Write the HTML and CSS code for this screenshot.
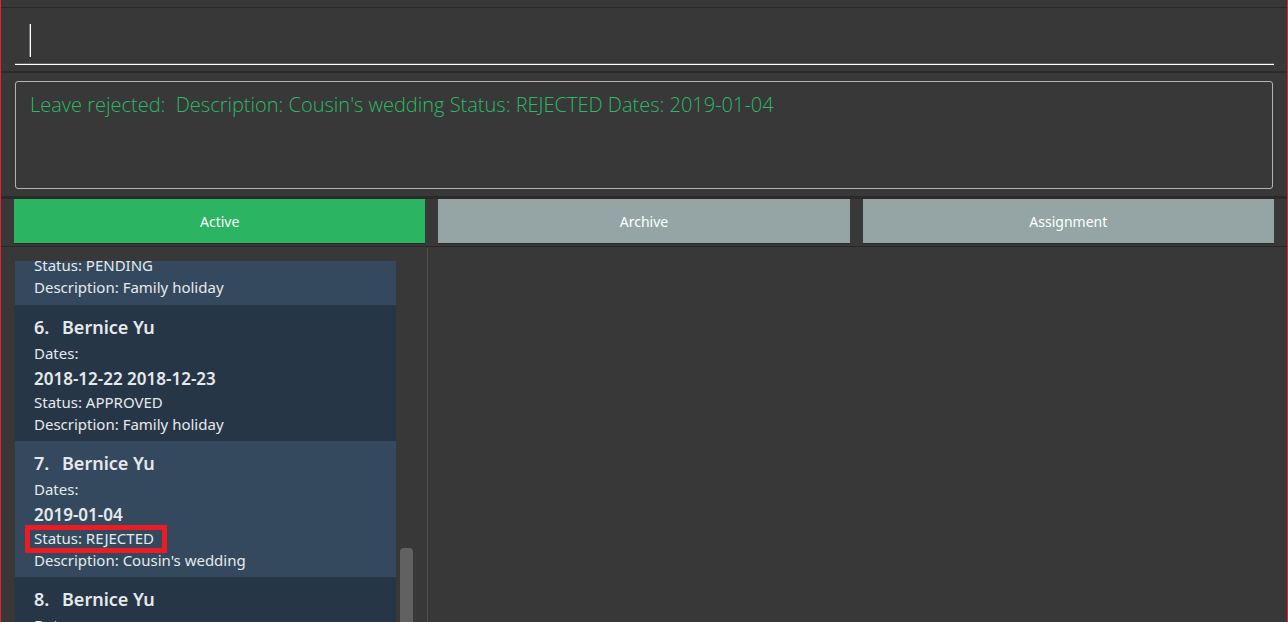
FILE: index.html
```html
<!DOCTYPE html>
<html lang="en">
<head>
<meta charset="utf-8">
<title>Leave applications</title>
<link rel="stylesheet" href="styles.css">
</head>
<body>
<div class="window">
  <div class="menu-edge"></div>
  <div class="command-bar">
    <input class="command-input" type="text" aria-label="Command" autocomplete="off">
    <span class="caret"></span>
  </div>
  <div class="result-bar">
    <output class="result">Leave rejected:&nbsp; Description: Cousin's wedding Status: REJECTED Dates: 2019-01-04</output>
  </div>
  <nav class="tabs">
    <button class="tab tab-active" type="button">Active</button>
    <button class="tab" type="button">Archive</button>
    <button class="tab" type="button">Assignment</button>
  </nav>
  <main class="panes">
    <section class="list-pane">
      <ol class="list">
        <li class="card">
          <p class="line"><span>Status: PENDING</span></p>
          <p class="line">Description: Family holiday</p>
        </li>
        <li class="card">
          <h2 class="name"><span class="number">6.</span>Bernice Yu</h2>
          <p class="label">Dates:</p>
          <p class="dates">2018-12-22 2018-12-23</p>
          <p class="line"><span>Status: APPROVED</span></p>
          <p class="line">Description: Family holiday</p>
        </li>
        <li class="card">
          <h2 class="name"><span class="number">7.</span>Bernice Yu</h2>
          <p class="label">Dates:</p>
          <p class="dates">2019-01-04</p>
          <p class="line"><span class="marked">Status: REJECTED</span></p>
          <p class="line">Description: Cousin's wedding</p>
        </li>
        <li class="card">
          <h2 class="name"><span class="number">8.</span>Bernice Yu</h2>
          <p class="label">Dates:</p>
        </li>
      </ol>
      <div class="scrollbar"><div class="thumb"></div></div>
    </section>
    <section class="detail-pane"></section>
  </main>
</div>
</body>
</html>
```

FILE: styles.css
```css
* {
  box-sizing: border-box;
}

body {
  margin: 0;
  background: #383838;
  font-family: "Segoe UI", "Open Sans", "Noto Sans", sans-serif;
}

.window {
  display: flex;
  flex-direction: column;
  height: 100vh;
  overflow: hidden;
  border: solid #e32232;
  border-width: 0 1px;
  background: #383838;
}

.menu-edge {
  flex: none;
  height: 8px;
  border-bottom: 1px solid #282828;
}

.command-bar {
  position: relative;
  flex: none;
  padding: 8px 13px 6px 14px;
  border-bottom: 2px solid #2b2b2b;
}

.command-input {
  display: block;
  width: 100%;
  height: 49px;
  padding: 0 14px;
  border: 0;
  border-bottom: 1px solid #fff;
  outline: 0;
  background: transparent;
  box-shadow: inset 0 -1px #606060;
  color: #fff;
  font: 300 20px "Segoe UI", "Open Sans", sans-serif;
}

.caret {
  position: absolute;
  top: 16px;
  left: 28px;
  width: 2px;
  height: 33px;
  border-left: 1px solid #777;
  background: #fff;
}

.result-bar {
  flex: none;
  padding: 8px 14px 7px;
  border-bottom: 3px solid #2a2a2a;
}

.result {
  display: block;
  height: 108px;
  padding: 8px 14px;
  border: 1px solid #b4b4b4;
  border-radius: 3px;
  color: #2cb868;
  font-size: 20px;
  font-weight: 300;
  line-height: 30px;
}

.tabs {
  flex: none;
  display: grid;
  grid-template-columns: repeat(3, 1fr);
  gap: 13px;
  padding: 0 13px 3px;
  border-bottom: 1px solid #282828;
}

.tab {
  height: 44px;
  padding: 0;
  border: 0;
  background: #95a5a5;
  box-shadow: 0 1px #2b2b2b;
  color: #fff;
  font: 14px "Segoe UI", "Noto Sans", sans-serif;
}

.tab-active {
  background: #2bb563;
}

.panes {
  flex: 1;
  min-height: 0;
  display: grid;
  grid-template-columns: 33.1% 1fr;
  padding-top: 1px;
}

.list-pane {
  display: flex;
  gap: 4px;
  min-height: 0;
  padding: 13px 14px 0;
}

.detail-pane {
  border-left: 1px solid #505050;
}

.list {
  flex: 1;
  overflow: hidden;
  margin: 0;
  padding: 0;
  list-style: none;
}

.card {
  padding: 9px 19px 6px;
  background: #273647;
  color: #e6e9ec;
  font: 15px "Segoe UI", "Noto Sans", sans-serif;
}

.card:nth-child(odd) {
  background: #34495e;
}

/* The list is scrolled into its first card. */
.card:first-child {
  margin-top: -7px;
  padding: 0 19px 7px;
}

.name,
.label,
.dates,
.line {
  margin: 0;
  font-weight: 400;
}

.name {
  display: flex;
  font-size: 18px;
  font-weight: 600;
  line-height: 26px;
}

.number {
  width: 28px;
}

.label {
  line-height: 26px;
}

.dates {
  font-size: 17px;
  font-weight: 600;
  line-height: 25px;
}

.line {
  line-height: 22px;
}

.marked {
  position: relative;
  display: inline-block;
}

.marked::after {
  content: "";
  position: absolute;
  inset: -2px -13px -4px -9px;
  border: 5px solid #ed1c24;
}

.scrollbar {
  flex: none;
  width: 13px;
  padding-top: 287px;
}

.thumb {
  height: 100%;
  border-radius: 4px 4px 0 0;
  background: #616161;
}
```
